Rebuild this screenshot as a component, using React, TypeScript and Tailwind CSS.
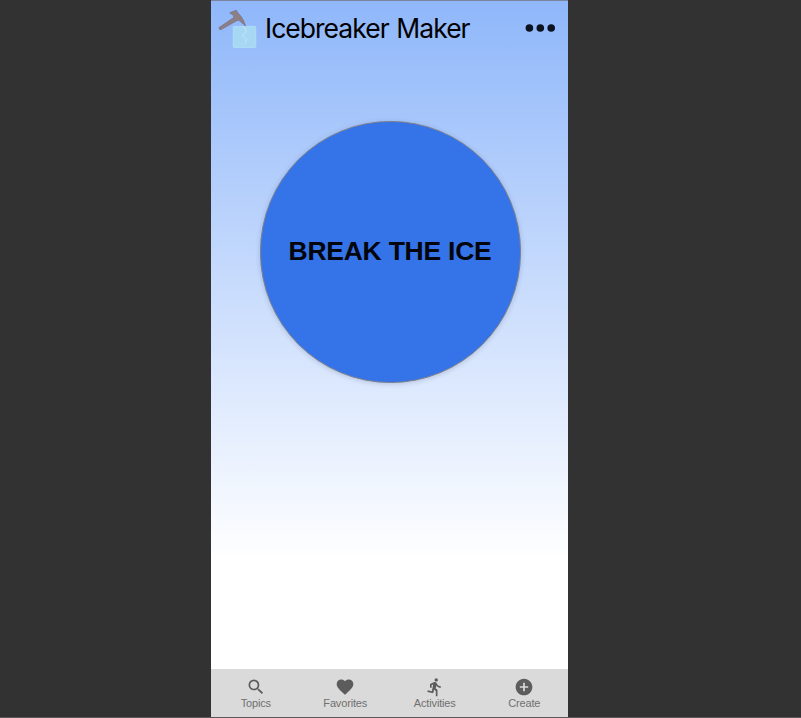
import { ReactNode } from "react";
import { MdSearch, MdFavorite, MdDirectionsRun, MdAddCircle } from "react-icons/md";

function Logo() {
  return (
    <svg width="40" height="42" viewBox="0 0 40 42" aria-hidden="true">
      <rect x="15.2" y="18.4" width="22.6" height="21" rx="0.8" fill="#a6d8f4" stroke="#b4e0f5" strokeWidth="0.8" />
      <path d="M25.8 19 L28.3 23.5 L24.5 28 L28.8 31.5 L26.8 35.5" fill="none" stroke="#c4e8f8" strokeWidth="0.8" />
      <path
        d="M11.7 4.8 L18.2 2.2 L20.2 5.2 L22.4 7.6 L25.4 12.2 L27.6 18 L22.8 13.8 L20.8 12.3 L18.6 12.8 L3 21.6 Q0.8 22 1 19.6 L15.8 9.6 L15.6 7.6 Z"
        fill="#8c7f85"
        stroke="#786f80"
        strokeWidth="0.7"
        strokeLinejoin="round"
      />
    </svg>
  );
}

function Dots() {
  return (
    <svg width="30" height="8" viewBox="0 0 30 8" fill="#0b1220" aria-hidden="true">
      <circle cx="4.4" cy="4" r="3.8" />
      <circle cx="15.3" cy="4" r="3.8" />
      <circle cx="26.2" cy="4" r="3.8" />
    </svg>
  );
}

function Tab({ icon, label }: { icon: ReactNode; label: string }) {
  return (
    <button className="flex flex-1 flex-col items-center pt-[8px] text-[#5c5c5c]">
      {icon}
      <span className="text-[11px] leading-[13px] tracking-[-0.16px] text-[#707070]">{label}</span>
    </button>
  );
}

export default function App() {
  return (
    <div className="flex h-[718px] w-[801px] border-b border-[#5c5759] bg-[#323232] pl-[211px] font-['Liberation_Sans',Arial,sans-serif]">
      <main className="flex h-[717px] w-[357px] flex-col overflow-hidden border-t border-[#7b83a0] bg-linear-[180deg,#8fb7fa_0px,#fff_560px]">
        <header className="flex h-14 items-center pl-[7px] pr-[13px]">
          <Logo />
          <h1 className="ml-[7px] whitespace-nowrap pb-[3px] font-['Inter',sans-serif] text-[26.5px] leading-8 tracking-[-0.98px] [word-spacing:1.2px] text-black">
            Icebreaker Maker
          </h1>
          <button className="ml-auto pb-[2px]" aria-label="More options">
            <Dots />
          </button>
        </header>
        <section className="flex flex-1 flex-col items-center pl-[2px] pt-16">
          <button className="mr-px h-[262px] w-[261px] rounded-full border border-[#7a7f8c] bg-[#3573e9] text-[26.5px] font-bold tracking-[-0.24px] text-[#02050b] shadow-[0_1px_5px_rgba(40,60,100,0.22)]">
            <span className="whitespace-nowrap">BREAK THE ICE</span>
          </button>
        </section>
        <nav className="flex h-12 w-[358px] shrink-0 bg-[#dadada]">
          <Tab icon={<MdSearch size={20} />} label="Topics" />
          <Tab icon={<MdFavorite size={20} />} label="Favorites" />
          <Tab icon={<MdDirectionsRun size={20} />} label="Activities" />
          <Tab icon={<MdAddCircle size={20} />} label="Create" />
        </nav>
      </main>
    </div>
  );
}
